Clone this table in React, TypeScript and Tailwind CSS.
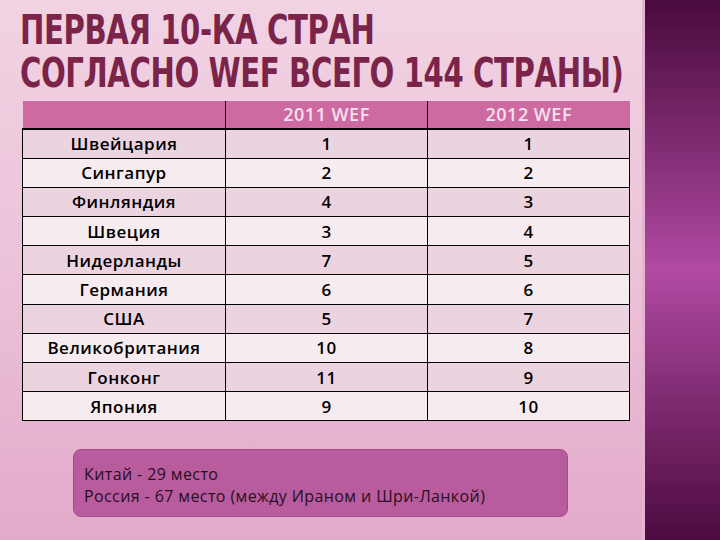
const rows: [string, string, string][] = [
  ['Швейцария', '1', '1'],
  ['Сингапур', '2', '2'],
  ['Финляндия', '4', '3'],
  ['Швеция', '3', '4'],
  ['Нидерланды', '7', '5'],
  ['Германия', '6', '6'],
  ['США', '5', '7'],
  ['Великобритания', '10', '8'],
  ['Гонконг', '11', '9'],
  ['Япония', '9', '10'],
];

export default function App() {
  return (
    <div className="flex h-[540px] w-[720px] overflow-hidden">
      {/* slide body */}
      <div className="flex w-[642px] flex-col bg-gradient-to-b from-[#f1d3e3] via-[#ecc2d8] to-[#e2aaca] pl-5">
        <h1
          className="mt-[9px] origin-left scale-x-[0.79] whitespace-nowrap text-[41px] font-bold uppercase leading-[43px] tracking-[-0.5px] text-[#7b2449]"
          style={{ fontFamily: '"DejaVu Sans Condensed", "DejaVu Sans", sans-serif' }}
        >
          Первая 10-ка стран
          <br />
          согласно WEF всего 144 страны)
        </h1>

        <table
          className="ml-[2px] mt-[6px] w-[608px] border-collapse text-[17px] font-semibold tracking-[0.5px] text-black"
          style={{ fontFamily: '"Open Sans", "DejaVu Sans", sans-serif' }}
        >
          <thead>
            <tr className="h-[28px] border-b-2 border-black bg-[#cd6aa1] text-[18px] text-[#f6e1ec]">
              <th className="w-[203px] border-r border-black font-semibold" />
              <th className="w-[202px] border-r border-black font-semibold">2011 WEF</th>
              <th className="font-semibold">2012 WEF</th>
            </tr>
          </thead>
          <tbody>
            {rows.map(([name, a, b], i) => (
              <tr
                key={name}
                className={`h-[29.2px] border border-black ${i % 2 === 0 ? 'bg-[#ecd3e0]' : 'bg-[#f6ebef]'}`}
              >
                <td className="border-r border-black p-0 text-center leading-none">{name}</td>
                <td className="border-r border-black p-0 text-center leading-none">{a}</td>
                <td className="p-0 text-center leading-none">{b}</td>
              </tr>
            ))}
          </tbody>
        </table>

        <div
          className="ml-[53px] mt-[28px] w-[495px] rounded-lg border border-[#a34a88] bg-[#b85c9d] px-[10px] pt-[13px] pb-[9px] text-[16px] leading-[22px] tracking-[0.4px] text-[#2a0e22]"
          style={{ fontFamily: '"Open Sans", "DejaVu Sans", sans-serif' }}
        >
          <div>Китай - 29 место</div>
          <div>Россия - 67 место (между Ираном и Шри-Ланкой)</div>
        </div>
      </div>

      {/* side band */}
      <div className="w-[3px] bg-[#e6b4d0]" />
      <div className="flex-1 bg-gradient-to-b from-[#4a0a3e] via-[#b14aa3] to-[#4d0b41]" />
    </div>
  );
}
